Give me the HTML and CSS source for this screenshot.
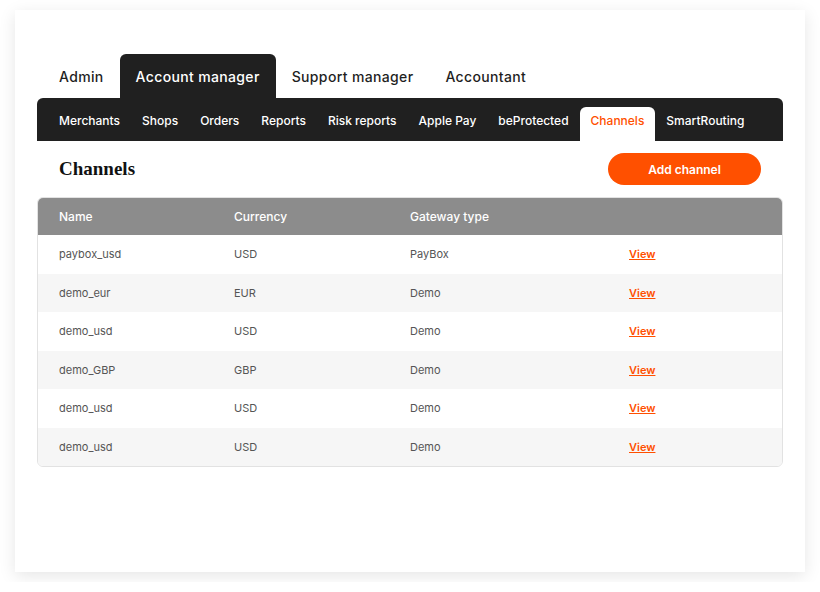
FILE: index.html
```html
<!DOCTYPE html>
<html>
<head>
<meta charset="utf-8">
<link rel="stylesheet" href="styles.css">
</head>
<body>
<div class="card">
  <nav class="roles">
    <a class="role">Admin</a>
    <a class="role active">Account manager</a>
    <a class="role">Support manager</a>
    <a class="role">Accountant</a>
  </nav>
  <nav class="sections">
    <a class="sec">Merchants</a>
    <a class="sec">Shops</a>
    <a class="sec">Orders</a>
    <a class="sec">Reports</a>
    <a class="sec">Risk reports</a>
    <a class="sec">Apple Pay</a>
    <a class="sec">beProtected</a>
    <a class="sec active">Channels</a>
    <a class="sec">SmartRouting</a>
  </nav>
  <div class="head">
    <h1 class="title">Channels</h1>
    <button class="add">Add channel</button>
  </div>
  <div class="table">
    <div class="row th"><span>Name</span><span>Currency</span><span>Gateway type</span><span></span></div>
    <div class="row"><span>paybox_usd</span><span>USD</span><span>PayBox</span><a class="view">View</a></div>
    <div class="row alt"><span>demo_eur</span><span>EUR</span><span>Demo</span><a class="view">View</a></div>
    <div class="row"><span>demo_usd</span><span>USD</span><span>Demo</span><a class="view">View</a></div>
    <div class="row alt"><span>demo_GBP</span><span>GBP</span><span>Demo</span><a class="view">View</a></div>
    <div class="row"><span>demo_usd</span><span>USD</span><span>Demo</span><a class="view">View</a></div>
    <div class="row alt"><span>demo_usd</span><span>USD</span><span>Demo</span><a class="view">View</a></div>
  </div>
</div>
</body>
</html>
```
FILE: styles.css
```css
* { box-sizing: border-box; }
body {
  margin: 0;
  background: #fff;
  font-family: "Inter", "Open Sans", sans-serif;
  color: #222;
}
.card {
  margin: 10px 15px;
  width: 790px;
  height: 562px;
  background: #fff;
  box-shadow: 0 4px 16px rgba(0,0,0,0.10);
  padding: 44px 22px 0;
}
.roles {
  display: flex;
  padding-left: 6px;
  height: 44px;
}
.role {
  display: flex;
  align-items: center;
  padding: 0 16px;
  font-size: 14px;
  font-weight: 500;
  letter-spacing: 0.35px;
  color: #1f1f1f;
  border-radius: 6px 6px 0 0;
}
.role.active {
  background: #202020;
  color: #fff;
}
.sections {
  display: flex;
  align-items: flex-end;
  height: 43px;
  background: #202020;
  border-radius: 6px 6px 0 0;
  padding-left: 11px;
}
.sec {
  display: flex;
  align-items: center;
  height: 34px;
  padding: 0 11px 8px;
  font-size: 12px;
  font-weight: 500;
  color: #fff;
  border-radius: 6px 6px 0 0;
}
.sec.active {
  background: #fff;
  color: #ff5000;
}
.head {
  display: flex;
  justify-content: space-between;
  align-items: center;
  padding: 12px 22px;
}
.title {
  margin: 0;
  font-family: "Liberation Serif", serif;
  font-size: 19px;
  font-weight: 700;
  color: #111;
}
.add {
  width: 153px;
  height: 32px;
  border: none;
  border-radius: 16px;
  background: #ff5000;
  color: #fff;
  font-family: inherit;
  font-size: 12px;
  font-weight: 600;
}
.table {
  border: 1px solid #e2e2e2;
  border-radius: 6px;
  overflow: hidden;
}
.row {
  display: grid;
  grid-template-columns: 175px 176px 219px 1fr;
  align-items: center;
  height: 38.5px;
  padding-left: 21px;
  font-size: 11px;
  color: #555;
}
.row.alt { background: #f6f6f6; }
.row.th {
  height: 38px;
  background: #8c8c8c;
  color: #fff;
  font-size: 12px;
  font-weight: 500;
  margin: -1px -1px 0;
  padding-left: 22px;
}
.view {
  color: #ff5000;
  font-weight: 600;
  text-decoration: underline;
}
```
